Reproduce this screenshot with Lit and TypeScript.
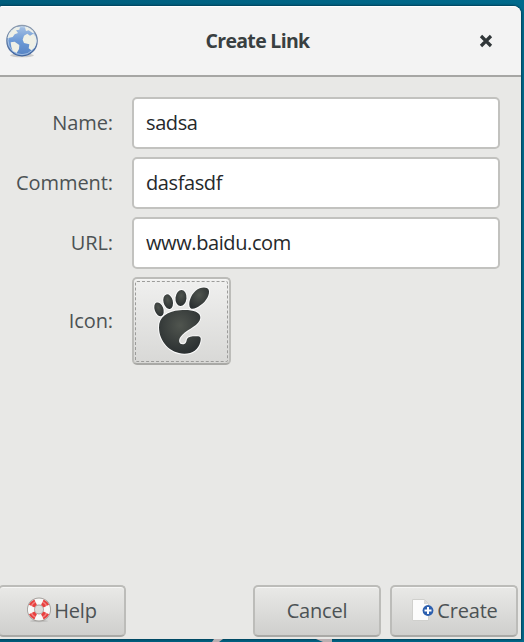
import { LitElement, html, css } from "lit";
import { customElement } from "lit/decorators.js";

@customElement("app-root")
export class AppRoot extends LitElement {
  static styles = css`
    :host {
      display: flex;
      flex-direction: column;
      box-sizing: border-box;
      width: 524px;
      height: 642px;
      padding: 6px 3px 0 0;
      overflow: hidden;
      background: linear-gradient(90deg, #005d7c, #006a8c);
      font-family: "Open Sans", "Noto Sans", sans-serif;
      font-size: 20px;
      color: #4c5254;
    }
    .window {
      flex: none;
      box-sizing: border-box;
      height: 633px;
      display: flex;
      flex-direction: column;
      background: #e8e8e6;
      border-radius: 2px 8px 0 0;
      box-shadow: 0 0 2px 1px #00415a;
    }
    .header {
      flex: none;
      box-sizing: border-box;
      height: 71px;
      display: grid;
      grid-template-columns: 44px 1fr 44px;
      align-items: center;
      background: #f3f3f3;
      border-top: 1px solid #fff;
      border-bottom: 2px solid #a6a6a4;
      border-radius: 2px 8px 0 0;
    }
    .globe { display: block; width: 44px; height: 44px; margin-top: -1px; }
    .title {
      text-align: center;
      font-weight: 700;
      font-size: 19.5px;
      letter-spacing: -0.7px;
      color: #393f41;
      padding: 0 6px 2px 0;
    }
    .close { display: block; width: 14px; height: 14px; margin-left: 2px; }
    .form {
      flex: 1;
      display: grid;
      grid-template-columns: 113px 368px;
      grid-auto-rows: min-content;
      column-gap: 19px;
      row-gap: 8px;
      align-items: center;
      padding-top: 20px;
    }
    .label { text-align: right; padding-bottom: 1px; letter-spacing: -0.08px; }
    .field {
      box-sizing: border-box;
      width: 368px;
      height: 52px;
      padding: 0 12px 1px;
      border: 2px solid #c2c2bf;
      border-radius: 5px;
      background: #fff;
      font: inherit;
      letter-spacing: -0.4px;
      color: #25292b;
      outline: none;
    }
    .button {
      box-sizing: border-box;
      display: flex;
      align-items: center;
      justify-content: center;
      width: 128px;
      height: 52px;
      padding: 0 0 2px;
      border: 2px solid #bcbcb9;
      border-bottom-color: #a9a9a6;
      border-radius: 5px;
      background: linear-gradient(#e9e9e7, #cfcfcd);
      box-shadow: inset 0 1px #f6f6f5;
      font: inherit;
      letter-spacing: -0.2px;
      color: #4c5254;
    }
    .picker { width: 99px; height: 88px; padding: 0; background: linear-gradient(#f0f0ef, #d8d8d6); }
    .focus {
      box-sizing: border-box;
      width: 93px;
      height: 81px;
      display: flex;
      justify-content: center;
      align-items: center;
      border: 1px dashed #9c9c9a;
      border-radius: 2px;
    }
    .foot { display: block; flex: none; width: 72px; height: 84px; margin: 0 2px 3px 0; }
    .actions { flex: none; display: flex; padding-bottom: 2px; margin-left: -2px; }
    .gap { flex: 1; }
    .create { margin: 0 3px 0 9px; }
    .icon { display: block; flex: none; width: 24px; height: 26px; margin-right: 3px; }
    .desktop { flex: 1; display: block; width: 524px; min-height: 0; }
  `;

  private row(label: string, value: string) {
    return html`<label class="label">${label}</label>
      <input class="field" aria-label=${label} .value=${value} />`;
  }

  render() {
    return html`
      <div class="window">
        <div class="header">
          <svg class="globe" viewBox="0 0 132 132">
            <defs>
              <linearGradient id="sea" x2="0" y2="1">
                <stop stop-color="#a9c3e4" /><stop offset=".5" stop-color="#6d9ad6" /><stop offset="1" stop-color="#5683c4" />
              </linearGradient>
              <linearGradient id="rim" x2="0" y2="1">
                <stop stop-color="#8d9cb0" /><stop offset="1" stop-color="#3f639c" />
              </linearGradient>
              <clipPath id="ball"><circle cx="66" cy="65" r="44" /></clipPath>
            </defs>
            <ellipse cx="66" cy="109" rx="36" ry="6" fill="#8c8c8c" opacity=".4" />
            <circle cx="66" cy="65" r="45.500" fill="url(#sea)" stroke="url(#rim)" stroke-width="4" />
            <g clip-path="url(#ball)" fill="#eff0e6">
              <path d="M20 58 28 34 44 24 60 24 58 32 48 34 54 42 44 46 38 54 28 56z" />
              <path d="M74 22 92 26 104 40 98 42 86 34 78 36z" />
              <path d="M68 62 72 50 82 44 90 50 100 44 108 54 112 68 104 86 94 94 86 88 88 76 72 72z" />
              <path d="M32 70 44 68 58 78 57 90 50 102 38 96 34 84z" />
            </g>
            <circle cx="66" cy="65" r="42" fill="none" stroke="#dce8f6" stroke-width="2.500" opacity=".65" />
          </svg>
          <div class="title">Create Link</div>
          <svg class="close" viewBox="0 0 14 14"><path d="M2 2 12 12M12 2 2 12" stroke="#303638" stroke-width="3.200" /></svg>
        </div>
        <div class="form">
          ${this.row("Name:", "sadsa")}
          ${this.row("Comment:", "dasfasdf")}
          ${this.row("URL:", "www.baidu.com")}
          <span class="label">Icon:</span>
          <button class="button picker" aria-label="Icon">
            <span class="focus">
              <svg class="foot" viewBox="0 0 216 252">
                <defs>
                  <radialGradient id="ink" cy=".35" r=".65"><stop stop-color="#50554f" /><stop offset="1" stop-color="#2b3031" /></radialGradient>
                </defs>
                <g fill="url(#ink)" stroke="#fafafa" stroke-width="6" paint-order="stroke">
                  <path d="M136 90C128 78 136 52 152 38 166 26 186 25 191 35 196 48 184 70 166 82 154 91 142 96 136 90z" />
                  <ellipse cx="108" cy="60" rx="16.500" ry="24" transform="rotate(6 108 60)" />
                  <ellipse cx="69.500" cy="71" rx="14" ry="22.500" transform="rotate(-14 69.500 71)" />
                  <ellipse cx="42" cy="94" rx="13" ry="21.500" transform="rotate(-20 42 94)" />
                  <path d="M105 97C135 94 168 100 166 120 164 142 130 152 112 170 98 183 100 198 113 199 124 199 124 190 126 183 130 176 140 175 152 175 168 174 169 180 166 192 160 215 143 227 118 227 75 227 42 190 42 148 42 118 65 100 105 97z" />
                </g>
              </svg>
            </span>
          </button>
        </div>
        <div class="actions">
          <button class="button">
            <svg class="icon" viewBox="0 0 24 26">
              <ellipse cx="12" cy="24" rx="9" ry="1.200" fill="#999" opacity=".4" />
              <circle cx="12" cy="12.500" r="8" fill="none" stroke="#a3a09c" stroke-width="8" />
              <circle cx="12" cy="12.500" r="8" fill="none" stroke="#f8f8f7" stroke-width="6.200" />
              <circle cx="12" cy="12.500" r="8" fill="none" stroke="#e8403f" stroke-width="6.200" pathLength="80" stroke-dasharray="9 11" stroke-dashoffset="-5.500" />
              <circle cx="12" cy="12.500" r="8.500" fill="none" stroke="#fff" stroke-width="1.500" opacity=".35" />
            </svg>
            Help
          </button>
          <span class="gap"></span>
          <button class="button cancel">Cancel</button>
          <button class="button create">
            <svg class="icon" viewBox="0 0 24 26">
              <path d="M2.500 2.500h12l4 4v17h-16z" fill="#fcfcfc" stroke="#d0d0cd" />
              <path d="M14 2.500v4.500h4.500z" fill="#d8d8d6" />
              <circle cx="18" cy="13.500" r="5.400" fill="#2c5fae" />
              <path d="M18 10v7M14.500 13.500h7" stroke="#fff" stroke-width="2" />
            </svg>
            Create
          </button>
        </div>
      </div>
      <svg class="desktop" viewBox="0 0 524 3" preserveAspectRatio="none">
        <path d="M214 0h9l-4 3h-7zM316 0h16v3h-9z" fill="#b9aeb0" />
      </svg>
    `;
  }
}
